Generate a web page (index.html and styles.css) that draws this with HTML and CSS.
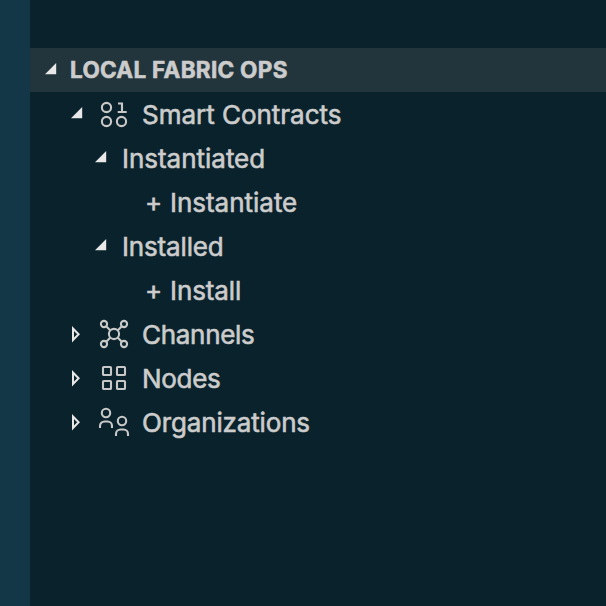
FILE: index.html
```
<!DOCTYPE html>
<html lang="en">
<head>
<meta charset="utf-8">
<title>Local Fabric Ops</title>
<link rel="stylesheet" href="styles.css">
</head>
<body>
<div class="app">
  <aside class="activity"></aside>
  <main class="panel">
    <h1 class="row header"><svg class="arrow" viewBox="0 0 12 44"><path d="M0 26.2 11.2 15v11.2z"/></svg><span class="title">LOCAL FABRIC OPS</span></h1>
    <div class="row root"><svg class="arrow" viewBox="0 0 12 44"><path d="M0 26.2 11.2 15v11.2z"/></svg>
      <svg class="icon" viewBox="0 0 32 32"><circle cx="8.5" cy="9.5" r="4.6"/><circle cx="8.5" cy="23.5" r="4.6"/><circle cx="23.500" cy="23.5" r="4.6"/><path d="M20 5.500h4V14M19.700 14h9"/></svg><span class="label contracts">Smart Contracts</span></div>
    <div class="row child"><svg class="arrow" viewBox="0 0 12 44"><path d="M0 26.2 11.2 15v11.2z"/></svg><span class="label instantiated">Instantiated</span></div>
    <div class="row action"><span class="plus">+</span><span class="label instantiate">Instantiate</span></div>
    <div class="row child"><svg class="arrow" viewBox="0 0 12 44"><path d="M0 26.2 11.2 15v11.2z"/></svg><span class="label installed">Installed</span></div>
    <div class="row action"><span class="plus">+</span><span class="label install">Install</span></div>
    <div class="row root"><svg class="arrow closed" viewBox="0 0 12 44"><path d="M2 16.500v11.500l5.600-5.750z"/></svg>
      <svg class="icon" viewBox="0 0 32 32"><circle cx="16" cy="16" r="5.1"/><circle cx="6" cy="6" r="3.1"/><circle cx="26" cy="6" r="3.1"/><circle cx="6" cy="26" r="3.1"/><circle cx="26" cy="26" r="3.1"/><path d="m8.2 8.2 4.2 4.2m7.2 7.2 4.2 4.2m0-15.6-4.2 4.2m-7.2 7.2-4.2 4.2"/></svg><span class="label channels">Channels</span></div>
    <div class="row root"><svg class="arrow closed" viewBox="0 0 12 44"><path d="M2 16.500v11.500l5.600-5.750z"/></svg>
      <svg class="icon" viewBox="0 0 32 32"><rect x="5" y="5" width="8" height="8" rx=".8"/><rect x="19" y="5" width="8" height="8" rx=".8"/><rect x="5" y="19" width="8" height="8" rx=".8"/><rect x="19" y="19" width="8" height="8" rx=".8"/></svg><span class="label nodes">Nodes</span></div>
    <div class="row root"><svg class="arrow closed" viewBox="0 0 12 44"><path d="M2 16.500v11.500l5.600-5.750z"/></svg>
      <svg class="icon" viewBox="0 0 32 32"><circle cx="8" cy="7" r="4.2"/><path d="M2 22v-2a4.5 4.5 0 0 1 4.5-4.5h3A4.5 4.5 0 0 1 14 20v2"/><circle cx="24" cy="15" r="4.2"/><path d="M18 30v-2a4.5 4.5 0 0 1 4.5-4.5h3A4.5 4.5 0 0 1 30 28v2"/></svg><span class="label organizations">Organizations</span></div>
  </main>
</div>
</body>
</html>
```
FILE: styles.css
```
* { box-sizing: border-box; }
body { margin: 0; background: #0a222b; color: #cccccc; font-family: Inter, "Liberation Sans", sans-serif; }
.app { display: flex; height: 606px; overflow: hidden; }
.activity { flex: 0 0 30px; background: #133746; }
.panel { flex: 1; padding-top: 48px; }
.row { display: flex; align-items: center; height: 44px; margin: 0; white-space: nowrap; font-size: 26px; line-height: 44px; font-weight: 400; -webkit-text-stroke: .6px #cccccc; }
.header { padding-left: 15px; background: #22353c; font-size: 22.5px; font-weight: 700; -webkit-text-stroke: .6px #cccccc; }
.root { padding-left: 41px; }
.child { padding-left: 65px; }
.action { padding-left: 115px; }
.arrow { flex: none; width: 12px; height: 44px; fill: #e8e8e8; }
.closed { fill: none; stroke: #e8e8e8; stroke-width: 2; }
.icon { flex: none; width: 32px; height: 32px; margin: 0 12px 0 15px; fill: none; stroke: #c8c8c8; stroke-width: 2.1; }
.title { margin-left: 13px; letter-spacing: .3px; }
.label { padding-top: 2px; }
.child .label { margin-left: 15px; }
.plus { width: 25px; }
.contracts { letter-spacing: -.02px; }
.instantiated { letter-spacing: -.02px; }
.instantiate { letter-spacing: -.02px; }
.installed { letter-spacing: -.15px; }
.install { letter-spacing: -.1px; }
.channels, .nodes { letter-spacing: -.3px; }
.organizations { letter-spacing: -.15px; }
```
